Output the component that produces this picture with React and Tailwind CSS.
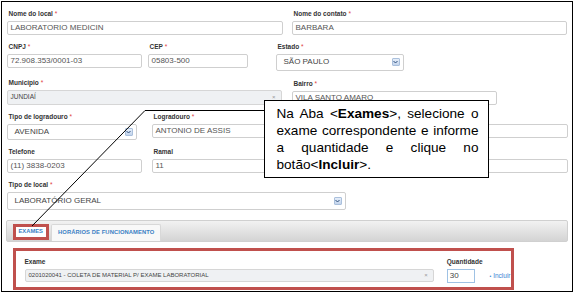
const font = { fontFamily: '"Liberation Sans", Arial, sans-serif' }

function Label({ text, req }) {
  return (
    <div className="pl-[2px] text-[6.5px] leading-[8px] font-bold text-[#333] mb-[3px] whitespace-nowrap">
      {text}
      {req && <span className="text-[#e04040] font-normal"> *</span>}
    </div>
  )
}

function Input({ value, h = 'h-[14px]' }) {
  return (
    <div className={`${h} border border-[#cfcfcf] rounded-[2px] bg-white flex items-center pl-[3px] text-[8px] text-[#555] whitespace-nowrap overflow-hidden`}>
      {value}
    </div>
  )
}

function Select({ value, h = 'h-[17px]' }) {
  return (
    <div className={`${h} border border-[#cfcfcf] rounded-[2px] bg-white flex items-center justify-between pl-[7px] pr-[3px] text-[8px] text-[#444] whitespace-nowrap`}>
      <span>{value}</span>
      <span className="w-[8px] h-[8px] rounded-[1px] border border-[#aac0dc] bg-gradient-to-b from-[#e6eef9] to-[#c3d4ec] flex items-center justify-center">
        <svg width="5" height="4" viewBox="0 0 5 4">
          <path d="M0.5 1 L2.5 3 L4.5 1" fill="none" stroke="#2d4f7c" strokeWidth="1" />
        </svg>
      </span>
    </div>
  )
}

function Clearable({ value, h, size = 'text-[6px]' }) {
  return (
    <div className={`${h} border border-[#d6d6d6] rounded-[2px] bg-[#eff1f3] flex items-center justify-between pl-[3px] pr-[5px] ${size} text-[#444] whitespace-nowrap overflow-hidden`}>
      <span>{value}</span>
      <span className="text-[6px] text-[#999]">×</span>
    </div>
  )
}

export default function App() {
  return (
    <div className="w-[575px] h-[294px] bg-white" style={font}>
      <div className="relative ml-[1px] mt-[1px] w-[572px] h-[291px] border-[1.5px] border-black overflow-hidden pl-[4.5px] pt-[7.5px]">
        {/* row 1 */}
        <div className="flex gap-[9px]">
          <div className="w-[276px]">
            <Label text="Nome do local" req />
            <Input value="LABORATORIO MEDICIN" />
          </div>
          <div className="w-[275px]">
            <Label text="Nome do contato" req />
            <Input value="BARBARA" />
          </div>
        </div>

        {/* row 2 */}
        <div className="flex items-start mt-[8px]">
          <div className="w-[135px]">
            <Label text="CNPJ" req />
            <Input value="72.908.353/0001-03" />
          </div>
          <div className="w-[100px] ml-[6px]">
            <Label text="CEP" req />
            <Input value="05803-500" />
          </div>
          <div className="w-[128px] ml-[28px]">
            <Label text="Estado" req />
            <Select value="SÃO PAULO" />
          </div>
        </div>

        {/* row 3 */}
        <div className="flex items-start mt-[8px]">
          <div className="w-[275px]">
            <Label text="Município" req />
            <Clearable value="JUNDIAÍ" h="h-[15px]" size="text-[6.5px]" />
          </div>
          <div className="w-[205px] ml-[10px] mt-[1px]">
            <Label text="Bairro" req />
            <Input value="VILA SANTO AMARO" />
          </div>
        </div>

        {/* row 4 */}
        <div className="flex items-start mt-[8px]">
          <div className="w-[130px]">
            <Label text="Tipo de logradouro" req />
            <Select value="AVENIDA" h="h-[16px]" />
          </div>
          <div className="w-[416px] ml-[15px]">
            <Label text="Logradouro" req />
            <Input value="ANTONIO DE ASSIS" />
          </div>
        </div>

        {/* row 5 */}
        <div className="flex items-start mt-[8px]">
          <div className="w-[135px]">
            <Label text="Telefone" />
            <Input value="(11) 3838-0203" />
          </div>
          <div className="w-[416px] ml-[10px]">
            <Label text="Ramal" />
            <Input value="11" />
          </div>
        </div>

        {/* row 6 */}
        <div className="mt-[8px] w-[339px]">
          <Label text="Tipo de local" req />
          <Select value="LABORATÓRIO GERAL" h="h-[18px]" />
        </div>

        {/* tabs */}
        <div className="mt-[10px] -ml-[1px] w-[562px] h-[22px] rounded-[2px] border border-[#d0d0d0] bg-gradient-to-b from-[#f2f2f2] to-[#d4d4d4] flex items-end pl-[6px] gap-[2px]">
          <div className="h-[16px] px-[3px] border-[3px] border-[#c0504d] bg-white flex items-center text-[5.8px] font-bold text-[#3b7fc4] mb-[1px]">
            EXAMES
          </div>
          <div className="h-[17px] px-[6px] border border-[#d8d8d8] border-b-0 rounded-t-[2px] bg-[#f8f8f8] flex items-center text-[5.8px] font-bold text-[#3b7fc4] tracking-[0.1px]">
            HORÁRIOS DE FUNCIONAMENTO
          </div>
        </div>

        {/* exam box */}
        <div className="mt-[6px] ml-[6px] w-[501px] h-[42px] border-[3px] border-[#c0504d] pl-[9px] pt-[7px] flex items-start">
          <div className="w-[413px]">
            <div className="text-[6.5px] leading-[8px] font-bold text-[#333] mb-[3px]">Exame</div>
            <Clearable value="0201020041 - COLETA DE MATERIAL P/ EXAME LABORATORIAL" h="h-[13px]" />
          </div>
          <div className="ml-[13px]">
            <div className="text-[6.5px] leading-[8px] font-bold text-[#333] mb-[3px]">Quantidade</div>
            <div className="w-[28px] h-[14px] border border-[#9fc2e4] bg-white flex items-center pl-[2px] text-[8px] text-[#444]">30</div>
          </div>
          <div className="ml-[7px] mt-[13px] text-[6.5px] text-[#3b84d4] whitespace-nowrap">
            <span className="text-[5px]">•</span> Incluir
          </div>
        </div>

        {/* pointer lines */}
        <svg className="absolute left-[-2.5px] top-[-2.5px] pointer-events-none" width="575" height="294">
          <path d="M264 110.5 L145 110.5 L32 226" fill="none" stroke="#000" strokeWidth="1" />
        </svg>

        {/* callout */}
        <div className="absolute left-[261.5px] top-[97.5px] w-[225px] h-[78px] border border-black bg-white pl-[12px] pr-[9px] pt-[4px] text-[13.6px] leading-[17px] text-black text-justify">
          Na Aba &lt;<b>Exames</b>&gt;, selecione o exame correspondente e informe a quantidade e clique no botão&lt;<b>Incluir</b>&gt;.
        </div>
      </div>
    </div>
  )
}
